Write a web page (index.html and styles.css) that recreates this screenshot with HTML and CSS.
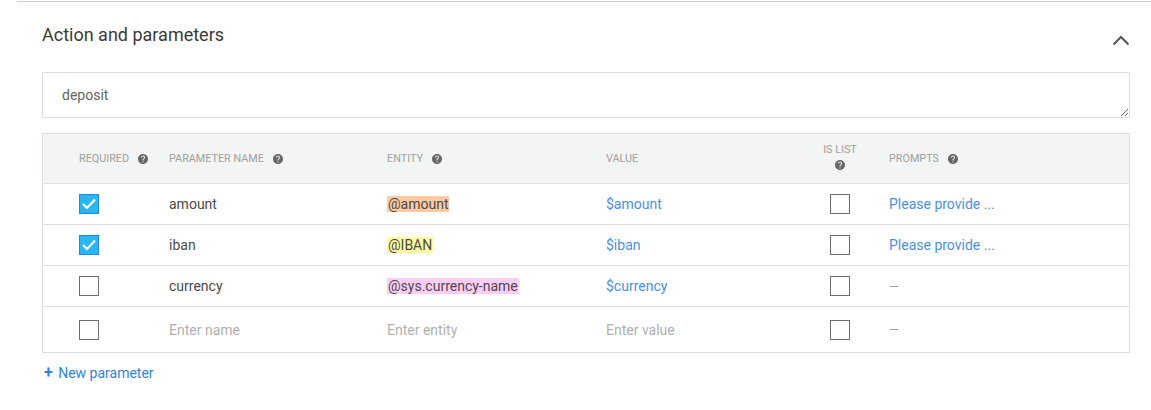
FILE: index.html
```html
<!DOCTYPE html>
<html>
<head>
<meta charset="utf-8">
<link rel="stylesheet" href="styles.css">
</head>
<body>
<section class="panel">
  <div class="panel-head">
    <h2 class="panel-title">Action and parameters</h2>
    <svg class="chevron" width="18" height="12" viewBox="0 0 18 12"><polyline points="1.5,10.5 9,3 16.5,10.5" fill="none" stroke="#555" stroke-width="2"/></svg>
  </div>
  <textarea class="action-input">deposit</textarea>

  <div class="params">
    <div class="grid head">
      <div class="hcell">REQUIRED <svg class="help" viewBox="0 0 24 24"><path d="M12 2C6.48 2 2 6.48 2 12s4.48 10 10 10 10-4.48 10-10S17.520 2 12 2zm1 17h-2v-2h2v2zm2.07-7.75l-.9.92C13.45 12.9 13 13.5 13 15h-2v-.5c0-1.1.45-2.1 1.17-2.830l1.24-1.26c.37-.36.59-.86.59-1.41 0-1.1-.9-2-2-2s-2 .9-2 2H8c0-2.21 1.79-4 4-4s4 1.79 4 4c0 .88-.36 1.68-.93 2.25z"/></svg></div>
      <div class="hcell">PARAMETER NAME <svg class="help" viewBox="0 0 24 24"><path d="M12 2C6.48 2 2 6.48 2 12s4.48 10 10 10 10-4.48 10-10S17.52 2 12 2zm1 17h-2v-2h2v2zm2.07-7.75l-.9.92C13.45 12.9 13 13.5 13 15h-2v-.5c0-1.1.45-2.1 1.17-2.83l1.24-1.26c.37-.36.59-.86.59-1.41 0-1.1-.9-2-2-2s-2 .9-2 2H8c0-2.21 1.79-4 4-4s4 1.79 4 4c0 .88-.36 1.68-.93 2.25z"/></svg></div>
      <div class="hcell">ENTITY <svg class="help" viewBox="0 0 24 24"><path d="M12 2C6.48 2 2 6.48 2 12s4.48 10 10 10 10-4.48 10-10S17.52 2 12 2zm1 17h-2v-2h2v2zm2.07-7.75l-.9.92C13.45 12.9 13 13.5 13 15h-2v-.5c0-1.1.45-2.1 1.17-2.83l1.24-1.26c.37-.36.59-.86.59-1.41 0-1.1-.9-2-2-2s-2 .9-2 2H8c0-2.21 1.79-4 4-4s4 1.79 4 4c0 .88-.36 1.68-.93 2.25z"/></svg></div>
      <div class="hcell">VALUE</div>
      <div class="hcell islist">IS LIST <svg class="help" viewBox="0 0 24 24"><path d="M12 2C6.48 2 2 6.48 2 12s4.48 10 10 10 10-4.48 10-10S17.52 2 12 2zm1 17h-2v-2h2v2zm2.07-7.75l-.9.92C13.45 12.9 13 13.5 13 15h-2v-.5c0-1.1.45-2.1 1.17-2.83l1.24-1.26c.37-.36.59-.86.59-1.41 0-1.1-.9-2-2-2s-2 .9-2 2H8c0-2.21 1.79-4 4-4s4 1.79 4 4c0 .88-.36 1.68-.93 2.25z"/></svg></div>
      <div class="hcell prompts">PROMPTS <svg class="help" viewBox="0 0 24 24"><path d="M12 2C6.48 2 2 6.48 2 12s4.48 10 10 10 10-4.48 10-10S17.52 2 12 2zm1 17h-2v-2h2v2zm2.07-7.75l-.9.92C13.45 12.9 13 13.5 13 15h-2v-.5c0-1.1.45-2.1 1.17-2.83l1.24-1.26c.37-.36.59-.86.59-1.41 0-1.1-.9-2-2-2s-2 .9-2 2H8c0-2.21 1.79-4 4-4s4 1.79 4 4c0 .88-.36 1.68-.93 2.25z"/></svg></div>
    </div>

    <div class="grid row">
      <div><span class="cb checked"><svg viewBox="0 0 18 18"><polyline points="3,9 7,13 15,4.5" fill="none" stroke="#fff" stroke-width="2.2"/></svg></span></div>
      <div class="name">amount</div>
      <div><span class="ent ent-amount">@amount</span></div>
      <div class="val">$amount</div>
      <div class="center"><span class="cb"></span></div>
      <div class="prompt">Please provide ...</div>
    </div>

    <div class="grid row">
      <div><span class="cb checked"><svg viewBox="0 0 18 18"><polyline points="3,9 7,13 15,4.5" fill="none" stroke="#fff" stroke-width="2.2"/></svg></span></div>
      <div class="name">iban</div>
      <div><span class="ent ent-iban">@IBAN</span></div>
      <div class="val">$iban</div>
      <div class="center"><span class="cb"></span></div>
      <div class="prompt">Please provide ...</div>
    </div>

    <div class="grid row">
      <div><span class="cb"></span></div>
      <div class="name">currency</div>
      <div><span class="ent ent-sys">@sys.currency-name</span></div>
      <div class="val">$currency</div>
      <div class="center"><span class="cb"></span></div>
      <div class="prompt dash">—</div>
    </div>

    <div class="grid row last">
      <div><span class="cb"></span></div>
      <div class="ph">Enter name</div>
      <div class="ph">Enter entity</div>
      <div class="ph">Enter value</div>
      <div class="center"><span class="cb"></span></div>
      <div class="prompt dash">—</div>
    </div>
  </div>

  <div class="new-param"><span class="plus">+</span> New parameter</div>
</section>
</body>
</html>
```

FILE: styles.css
```css
html, body {
  margin: 0;
  padding: 0;
  background: #fff;
}
body {
  font-family: Roboto, "Liberation Sans", Arial, sans-serif;
  color: #333;
  width: 1151px;
  height: 410px;
  overflow: hidden;
}
.panel {
  margin: 1px 0 0 17px;
  border-top: 1px solid #cfcfcf;
  padding: 0 21px 0 25px;
}
.panel-head {
  display: flex;
  justify-content: space-between;
  align-items: flex-start;
  padding-top: 21px;
}
.panel-title {
  margin: 0;
  font-size: 18px;
  line-height: 24px;
  font-weight: 400;
  color: #3a3a3a;
}
.chevron {
  margin-top: 11px;
  display: block;
}
.action-input {
  display: block;
  box-sizing: border-box;
  width: 100%;
  height: 46px;
  margin: 25px 0 0;
  border: 1px solid #ddd;
  border-radius: 0;
  padding: 12px 19px;
  font-family: Roboto, "Liberation Sans", Arial, sans-serif;
  font-size: 14px;
  line-height: 20px;
  color: #666;
  resize: vertical;
  outline: none;
  background: #fff;
}
.params {
  margin-top: 15px;
  border: 1px solid #ddd;
}
.grid {
  display: grid;
  grid-template-columns: 90px 218px 219px 204px 60px 1fr;
  padding-left: 36px;
  align-items: center;
}
.head {
  height: 49px;
  background: #f3f4f4;
  border-bottom: 1px solid #e0e0e0;
}
.hcell {
  font-size: 10.8px;
  color: #a0a0a0;
  display: flex;
  align-items: center;
  gap: 8px;
  white-space: nowrap;
}
.help {
  width: 12px;
  height: 12px;
  fill: #666;
  flex: none;
}
.islist {
  flex-direction: column;
  gap: 3px;
  justify-self: center;
  margin-top: -3px;
}
.prompts, .prompt {
  padding-left: 19px;
}
.row {
  height: 40px;
  border-bottom: 1px solid #e0e0e0;
  font-size: 14px;
}
.row.last {
  height: 45px;
  border-bottom: none;
}
.row > div {
  display: flex;
  align-items: center;
}
.center {
  justify-content: center;
}
.cb {
  box-sizing: border-box;
  display: block;
  width: 20px;
  height: 20px;
  border: 1px solid #6e6e6e;
  background: #fff;
}
.cb.checked {
  background: #29b6f6;
  border-color: #1e88e5;
}
.cb svg {
  display: block;
  width: 18px;
  height: 18px;
}
.name {
  color: #4a4a4a;
}
.ent {
  padding: 0 1px;
  color: #4a4a4a;
}
.ent-amount { background: #ffc9a1; }
.ent-iban { background: #fdfd9e; }
.ent-sys { background: #fecdf6; }
.val, .prompt {
  color: #4a90e2;
}
.dash {
  color: #a0a0a0;
  font-size: 13px;
}
.ph {
  color: #b0b0b0;
}
.new-param {
  margin: 11px 0 0 2px;
  font-size: 14px;
  line-height: 18px;
  color: #2d84dc;
}
.plus {
  font-weight: 700;
  font-size: 16px;
  margin-right: 2px;
}
```
